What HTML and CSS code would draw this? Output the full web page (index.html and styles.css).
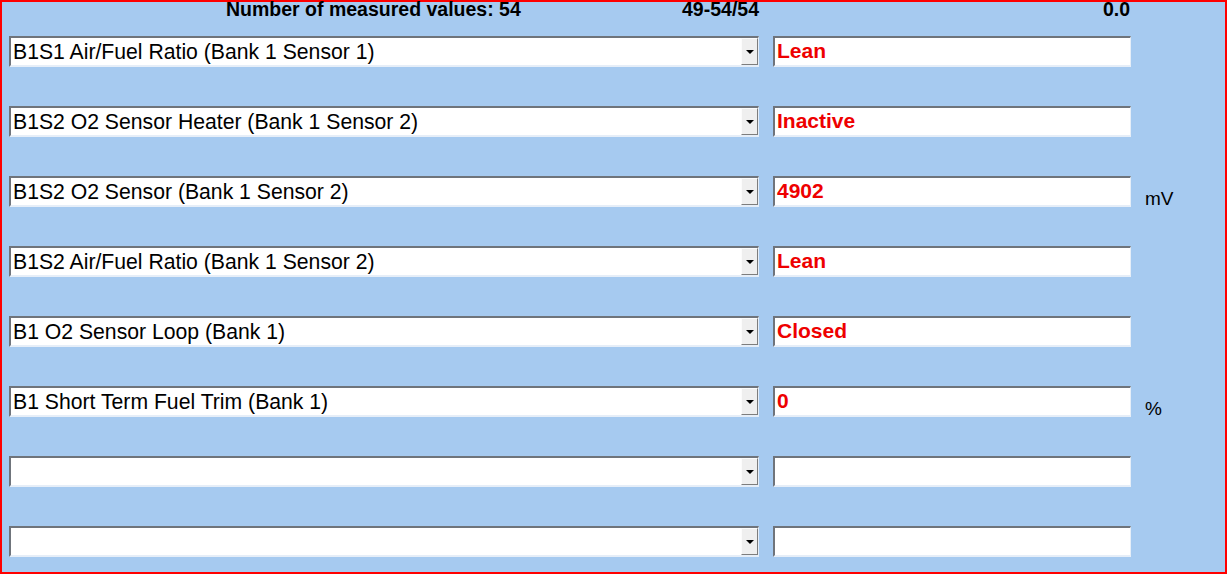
FILE: index.html
```html
<!DOCTYPE html>
<html>
<head>
<meta charset="utf-8">
<link rel="stylesheet" href="styles.css">
</head>
<body>
<div class="frame">
  <div class="header">
    <div class="head head-main">
      <span class="count">Number of measured values: 54</span>
      <span class="range">49-54/54</span>
    </div>
    <div class="head head-val">0.0</div>
    <div class="head"></div>
  </div>
  <div class="grid">
    <div class="sel"><span class="sel-text">B1S1 Air/Fuel Ratio (Bank 1 Sensor 1)</span><span class="btn"><span class="arrow"></span></span></div>
    <div class="val">Lean</div>
    <div class="unit"></div>

    <div class="sel"><span class="sel-text">B1S2 O2 Sensor Heater (Bank 1 Sensor 2)</span><span class="btn"><span class="arrow"></span></span></div>
    <div class="val">Inactive</div>
    <div class="unit"></div>

    <div class="sel"><span class="sel-text">B1S2 O2 Sensor (Bank 1 Sensor 2)</span><span class="btn"><span class="arrow"></span></span></div>
    <div class="val">4902</div>
    <div class="unit">mV</div>

    <div class="sel"><span class="sel-text">B1S2 Air/Fuel Ratio (Bank 1 Sensor 2)</span><span class="btn"><span class="arrow"></span></span></div>
    <div class="val">Lean</div>
    <div class="unit"></div>

    <div class="sel"><span class="sel-text">B1 O2 Sensor Loop (Bank 1)</span><span class="btn"><span class="arrow"></span></span></div>
    <div class="val">Closed</div>
    <div class="unit"></div>

    <div class="sel"><span class="sel-text">B1 Short Term Fuel Trim (Bank 1)</span><span class="btn"><span class="arrow"></span></span></div>
    <div class="val">0</div>
    <div class="unit">%</div>

    <div class="sel"><span class="sel-text"></span><span class="btn"><span class="arrow"></span></span></div>
    <div class="val"></div>
    <div class="unit"></div>

    <div class="sel"><span class="sel-text"></span><span class="btn"><span class="arrow"></span></span></div>
    <div class="val"></div>
    <div class="unit"></div>
  </div>
</div>
</body>
</html>
```

FILE: styles.css
```css
html, body {
  margin: 0;
  padding: 0;
}
body {
  font-family: "Liberation Sans", Arial, sans-serif;
  background: #A6CAF0;
}
.frame {
  box-sizing: border-box;
  width: 1227px;
  height: 574px;
  border: 2px solid #ff0000;
  background: #A6CAF0;
  padding: 0 0 0 7px;
}
.header,
.grid {
  display: grid;
  grid-template-columns: 750px 358px 1fr;
  column-gap: 14px;
}
.header {
  height: 34px;
}
.grid {
  grid-template-rows: repeat(8, 31px);
  row-gap: 39px;
}
.head {
  font-weight: bold;
  font-size: 19.5px;
  line-height: 15px;
  color: #000;
}
.head-main {
  display: flex;
  justify-content: space-between;
  padding-left: 217px;
}
.head-val {
  text-align: right;
  padding-right: 1px;
}
.sel {
  box-sizing: border-box;
  height: 31px;
  display: flex;
  background: #fff;
  border-style: solid;
  border-width: 2px 1px 2px 2px;
  border-color: #6f747b #e6eef8 #e6eef8 #6f747b;
}
.sel-text {
  flex: 1;
  font-size: 21.2px;
  line-height: 23px;
  padding-left: 2px;
  padding-top: 2px;
  color: #000;
  white-space: nowrap;
  overflow: hidden;
}
.btn {
  box-sizing: border-box;
  width: 17px;
  height: 27px;
  background: #efefef;
  border-style: solid;
  border-width: 1px;
  border-color: #fcfcfc #7d7d7d #7d7d7d #fcfcfc;
  display: flex;
  align-items: center;
  justify-content: center;
}
.arrow {
  width: 0;
  height: 0;
  border-left: 4px solid transparent;
  border-right: 4px solid transparent;
  border-top: 4px solid #000;
  margin-left: 1px;
}
.val {
  box-sizing: border-box;
  height: 31px;
  background: #fff;
  border-style: solid;
  border-width: 2px 1px 2px 2px;
  border-color: #6f747b #e6eef8 #e6eef8 #6f747b;
  font-size: 21px;
  font-weight: bold;
  line-height: 23px;
  padding-left: 2px;
  padding-top: 1px;
  color: #ee0000;
}
.unit {
  font-size: 19px;
  line-height: 23px;
  padding-top: 11px;
  color: #000;
}
```
